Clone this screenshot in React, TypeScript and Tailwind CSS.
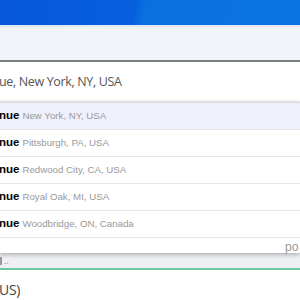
import React from "react";

const rows = [
  "New York, NY, USA",
  "Pittsburgh, PA, USA",
  "Redwood City, CA, USA",
  "Royal Oak, MI, USA",
  "Woodbridge, ON, Canada",
];

export default function App() {
  return (
    <div className="w-[300px] h-[300px] overflow-hidden bg-white flex flex-col">
      <div className="h-[25px] shrink-0 bg-[linear-gradient(100deg,#0658d8_0%,#0660de_45%,#0a6fe0_48%,#0c74e2_100%)]" />
      <div className="h-[2px] shrink-0 bg-[#dfe8f4]" />
      <div className="h-[33px] shrink-0 bg-[#f0f3f7]" />
      <div className="h-[2px] shrink-0 bg-[#7b7d80]" />
      <div className="h-[40px] shrink-0 flex items-center">
        <span className="-ml-[1px] mt-[1px] text-[12.5px] text-[#555] font-['Open_Sans',sans-serif] tracking-[-0.35px] whitespace-nowrap">
          ue, New York, NY, USA
        </span>
      </div>
      <div className="h-[151px] shrink-0 bg-white shadow-[0_-1px_2px_rgba(0,0,0,0.12),0_2px_4px_rgba(0,0,0,0.25)] relative z-10 flex flex-col border-t border-[#d9d9d9]">
        {rows.map((r, i) => (
          <div
            key={r}
            className={`h-[27px] shrink-0 flex items-center border-b border-[#e6e6e6] font-['Liberation_Sans',Arial,sans-serif] whitespace-nowrap ${i === 0 ? "bg-[#eef0fb]" : "bg-white"}`}
          >
            <span className="-ml-[1px] text-[11.5px] font-bold text-black">nue</span>
            <span className="ml-[3px] text-[9.7px] text-[#999]">{r}</span>
          </div>
        ))}
        <div className="flex-1 flex items-end pb-[2px] pl-[285px]">
          <span className="text-[12px] text-[#999] font-['Liberation_Sans',Arial,sans-serif] whitespace-nowrap">po</span>
        </div>
      </div>
      <div className="h-[15px] shrink-0 bg-[#eef0f4] flex items-center">
        <span className="w-[2px] h-[8px] bg-[#999]" />
        <span className="ml-[2px] text-[9px] text-[#d66] leading-none">..</span>
      </div>
      <div className="h-[2px] shrink-0 bg-[#6dc7a6]" />
      <div className="flex-1 flex items-center">
        <span className="-ml-[1px] mt-[8px] text-[14px] text-[#444] font-['Open_Sans',sans-serif] tracking-[-0.3px]">US)</span>
      </div>
    </div>
  );
}
